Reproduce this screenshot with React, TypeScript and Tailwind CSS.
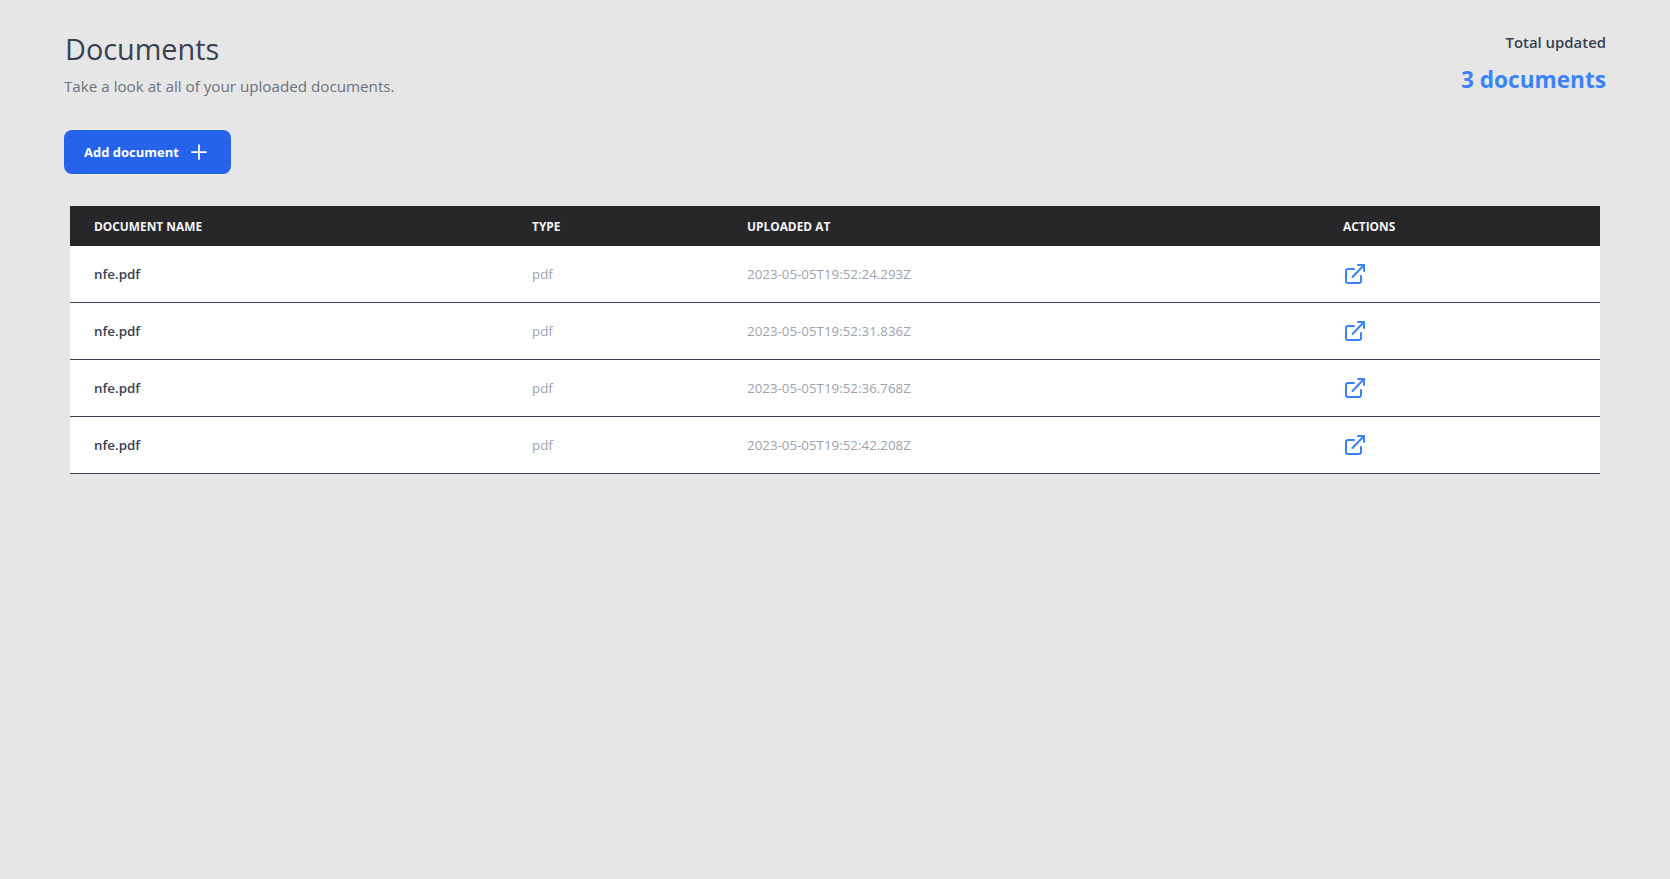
import {Plus} from 'lucide-react';

const DOCUMENTS = [
  {name: 'nfe.pdf', type: 'pdf', uploadedAt: '2023-05-05T19:52:24.293Z'},
  {name: 'nfe.pdf', type: 'pdf', uploadedAt: '2023-05-05T19:52:31.836Z'},
  {name: 'nfe.pdf', type: 'pdf', uploadedAt: '2023-05-05T19:52:36.768Z'},
  {name: 'nfe.pdf', type: 'pdf', uploadedAt: '2023-05-05T19:52:42.208Z'},
];

function OpenIcon() {
  return (
    <svg
      viewBox="0 0 24 24"
      fill="none"
      stroke="currentColor"
      strokeWidth={2}
      strokeLinecap="round"
      strokeLinejoin="round"
      className="h-6 w-6 text-[#3b82f6]"
    >
      <path d="M11 6H5a2 2 0 0 0-2 2v10a2 2 0 0 0 2 2h11a2 2 0 0 0 2-2v-5" />
      <path d="M9.5 14 21 2" />
      <path d="M15 2h6v6" />
    </svg>
  );
}

export default function App() {
  return (
    <div className="min-h-[879px] bg-[#e6e6e6] px-16 pt-[29px] font-['Open_Sans','Noto_Sans',sans-serif]">
      <div className="flex items-start justify-between">
        <div>
          <h1 className="ml-px text-[28.8px] leading-[40px] font-medium text-[#374151]">
            Documents
          </h1>
          <p className="mt-[5px] text-[15.2px] leading-6 text-[#6b7280]">
            Take a look at all of your uploaded documents.
          </p>
        </div>
        <div className="text-right">
          <p className="pt-px text-[14.9px] leading-6 font-semibold text-[#374151]">
            Total updated
          </p>
          <p className="mt-2.5 text-[22.6px] leading-8 font-bold text-[#3b82f6]">
            3 documents
          </p>
        </div>
      </div>

      <button className="mt-8 flex h-11 w-[167px] items-center justify-center gap-2 rounded-lg bg-[#2563eb] text-[13px] font-bold text-white">
        <span className="pt-px">Add document</span>
        <Plus className="h-6 w-6" strokeWidth={1.75} />
      </button>

      <div className="mt-8 px-1.5">
        <table className="w-full table-fixed border-separate border-spacing-0 text-left text-[13.35px]">
          <colgroup>
            <col className="w-[438px]" />
            <col className="w-[215px]" />
            <col className="w-[596px]" />
            <col />
          </colgroup>
          <thead className="bg-[#27272a] text-[11.9px] text-[#f3f4f6] uppercase">
            <tr className="h-10">
              <th className="px-6 pt-px font-bold">Document name</th>
              <th className="px-6 pt-px font-bold">Type</th>
              <th className="px-6 pt-px font-bold">Uploaded at</th>
              <th className="px-6 pt-px font-bold">Actions</th>
            </tr>
          </thead>
          <tbody className="bg-white">
            {DOCUMENTS.map((doc) => (
              <tr key={doc.uploadedAt} className="h-[57px]">
                <td className="border-b border-[#374151] px-6 font-semibold text-[#374151]">
                  {doc.name}
                </td>
                <td className="border-b border-[#374151] px-6 text-[#9ca3af]">{doc.type}</td>
                <td className="border-b border-[#374151] px-6 text-[#9ca3af]">
                  {doc.uploadedAt}
                </td>
                <td className="border-b border-[#374151] px-6 pt-px">
                  <OpenIcon />
                </td>
              </tr>
            ))}
          </tbody>
        </table>
      </div>
    </div>
  );
}
